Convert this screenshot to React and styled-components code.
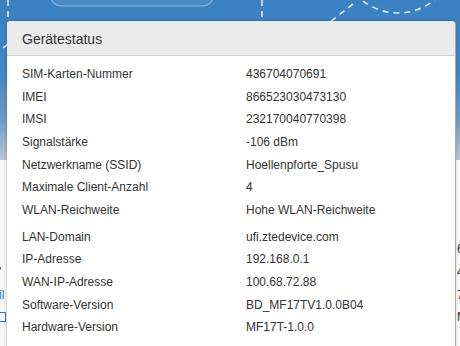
import React from "react"
import styled, { createGlobalStyle } from "styled-components"

const GlobalStyle = createGlobalStyle`
  html, body {
    margin: 0;
    padding: 0;
    background: #f5f5f5;
    font-family: "Liberation Sans", Arial, sans-serif;
  }
`

const deviceStatus = [
  ["SIM-Karten-Nummer", "436704070691"],
  ["IMEI", "866523030473130"],
  ["IMSI", "232170040770398"],
  ["Signalstärke", "-106 dBm"],
  ["Netzwerkname (SSID)", "Hoellenpforte_Spusu"],
  ["Maximale Client-Anzahl", "4"],
  ["WLAN-Reichweite", "Hohe WLAN-Reichweite", true],
  ["LAN-Domain", "ufi.ztedevice.com"],
  ["IP-Adresse", "192.168.0.1"],
  ["WAN-IP-Adresse", "100.68.72.88"],
  ["Software-Version", "BD_MF17TV1.0.0B04"],
  ["Hardware-Version", "MF17T-1.0.0"],
]

function Decoration() {
  return (
    <svg width="460" height="160" viewBox="0 0 460 160">
      <g fill="none" stroke="rgba(255,255,255,0.85)" strokeWidth="1.6" strokeDasharray="6 5">
        <path d="M8 0 V40 Q8 48 0 48" />
        <path d="M262 0 V22" />
        <ellipse cx="398" cy="-44" rx="57" ry="57" />
        <path d="M353 4 L330 22" />
      </g>
      <rect x="51" y="-20" width="162" height="26" rx="10" fill="rgba(255,255,255,0.08)" stroke="rgba(255,255,255,0.4)" strokeWidth="1.2" />
    </svg>
  )
}

function App() {
  return (
    <Page>
      <GlobalStyle />
      <Banner>
        <Decoration />
      </Banner>
      <BehindContent>
        <BehindRow>
          <BehindLeft />
          <BehindRight>6</BehindRight>
        </BehindRow>
        <BehindRow>
          <BehindLeft dark>'</BehindLeft>
          <BehindRight>4</BehindRight>
        </BehindRow>
        <BehindRow>
          <BehindLeft>il</BehindLeft>
          <BehindRight>7</BehindRight>
        </BehindRow>
        <BehindRow>
          <BehindLeft>
            <Square />
          </BehindLeft>
          <BehindRight>M</BehindRight>
        </BehindRow>
      </BehindContent>

      <Modal>
        <ModalHeader>Gerätestatus</ModalHeader>
        <ModalBody>
          {deviceStatus.map(([label, value, spaced]) => (
            <Row key={label} $spaced={spaced}>
              <Label>{label}</Label>
              <Value>{value}</Value>
            </Row>
          ))}
        </ModalBody>
      </Modal>
    </Page>
  )
}

export default App

const Page = styled.div`
  position: relative;
  width: 460px;
  height: 346px;
  overflow: hidden;
  background: #f6f6f6;
`

const Banner = styled.div`
  height: 160px;
  background: linear-gradient(
    to bottom,
    #3a81c3 0%,
    #4186c4 45%,
    #6f9bc6 75%,
    #b9c5d1 100%
  );
  svg {
    display: block;
  }
`

const BehindContent = styled.div`
  display: flex;
  flex-direction: column;
  padding-top: 78px;
`

const BehindRow = styled.div`
  display: flex;
  justify-content: space-between;
  height: 22.7px;
  align-items: center;
  font-size: 12px;
`

const BehindLeft = styled.div`
  width: 7px;
  overflow: hidden;
  white-space: nowrap;
  color: ${(p) => (p.dark ? "#333" : "#337ab7")};
  text-indent: -1px;
`

const Square = styled.span`
  display: block;
  width: 9px;
  height: 10px;
  margin-left: -3px;
  border: 1px solid #337ab7;
  box-sizing: border-box;
`

const BehindRight = styled.div`
  width: 5px;
  overflow: hidden;
  color: #333;
  margin-right: -2px;
`

const Modal = styled.div`
  position: absolute;
  left: 7px;
  top: 21px;
  width: 448px;
  height: 360px;
  background: #fff;
  border-radius: 4px 4px 0 0;
  box-shadow: 0 0 3px rgba(0, 0, 0, 0.35), 1px 0 0 #bdbdbd;
`

const ModalHeader = styled.div`
  display: flex;
  align-items: center;
  height: 34px;
  padding: 1px 15px 0;
  box-sizing: border-box;
  height: 35px;
  background: #ebebeb;
  border-bottom: 1px solid #d2d2d2;
  border-radius: 4px 4px 0 0;
  font-size: 14px;
  color: #333;
`

const ModalBody = styled.div`
  padding: 7px 15px 0;
`

const Row = styled.div`
  display: grid;
  grid-template-columns: 224px 1fr;
  align-items: center;
  height: 22.6px;
  margin-bottom: ${(p) => (p.$spaced ? "4.4px" : "0")};
  font-size: 12px;
  color: #333;
`

const Label = styled.div`
  white-space: nowrap;
`

const Value = styled.div`
  white-space: nowrap;
`
